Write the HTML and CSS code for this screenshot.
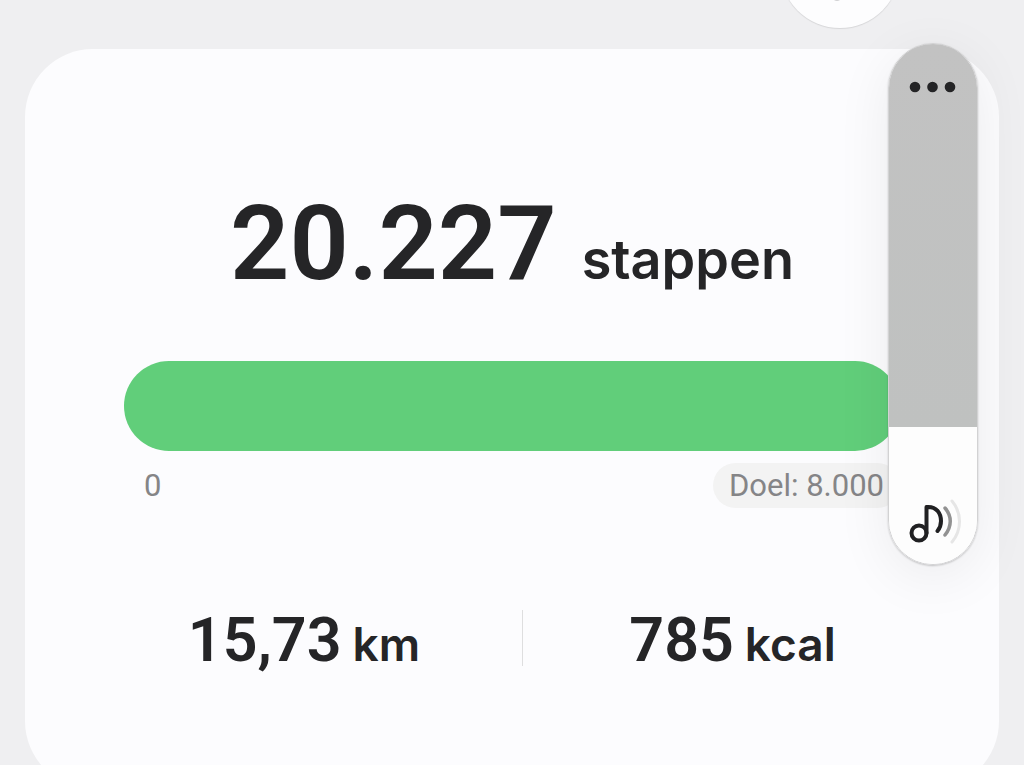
FILE: index.html
```html
<!DOCTYPE html>
<html lang="nl">
<head>
  <meta charset="utf-8">
  <meta name="viewport" content="width=device-width, initial-scale=1">
  <title>Stappen</title>
  <link rel="stylesheet" href="styles.css">
</head>
<body>

    <header class="top">
        <button class="round-button" type="button" aria-label="Info">
            <svg width="20" height="20" viewBox="0 0 20 20"><circle cx="7" cy="10" r="5" fill="#d2d2d4"/></svg>
        </button>
    </header>

    <main class="card">
        <h1 class="steps">
            <span class="steps-value">20.227</span>
            <span class="steps-unit">stappen</span>
        </h1>

        <progress class="bar" value="8000" max="8000" aria-label="Stappen"></progress>

        <div class="scale">
            <span class="scale-start">0</span>
            <span class="goal">Doel: 8.000</span>
        </div>

        <div class="stats">
            <div class="stat stat-distance">
                <span class="stat-value">15,73</span>
                <span class="stat-unit">km</span>
            </div>
            <div class="stat stat-energy">
                <span class="stat-value">785</span>
                <span class="stat-unit">kcal</span>
            </div>
        </div>
    </main>

    <!-- media volume, floats over the page -->
    <div class="volume">
        <input class="volume-slider" type="range" min="0" max="100" value="27" aria-label="Volume">
        <button class="volume-more" type="button" aria-label="Meer">
            <svg width="48" height="12" viewBox="0 0 48 12" fill="#242426">
                <circle cx="6" cy="6" r="5.3"/>
                <circle cx="23.500" cy="6" r="5.3"/>
                <circle cx="41" cy="6" r="5.3"/>
            </svg>
        </button>
        <svg class="volume-icon" width="56" height="48" viewBox="0 0 56 48" fill="none" stroke-width="4" stroke-linecap="round" stroke-linejoin="round">
            <circle cx="12" cy="35" r="7.5" stroke="#202022"/>
            <path d="M19.500 35V9C30 8 34 16 34 23C34 27 33 30 30.500 33" stroke="#202022"/>
            <path d="M38 10C45 18 45 28 38 37" stroke="#929292" stroke-width="3.500"/>
            <path d="M45 3C55 15 55 32 45 44" stroke="#e6e6e6" stroke-width="3"/>
        </svg>
    </div>

</body>
</html>
```
FILE: styles.css
```css
* {
    box-sizing: border-box;
}

body {
    margin: 0;
    height: 100vh;
    overflow: hidden;
    background: #efeff1;
    color: #252527;
    font-family: Roboto, "Liberation Sans", sans-serif;
}

button {
    padding: 0;
    border: 0;
    background: none;
    cursor: pointer;
}

svg {
    display: block;
}

.top {
    display: flex;
    align-items: flex-end;
    justify-content: flex-end;
    height: 49px;
    padding: 0 124px 21px;
}

.round-button {
    display: flex;
    flex: none;
    align-items: center;
    justify-content: center;
    width: 120px;
    height: 120px;
    border-radius: 50%;
    background: #fdfdfe;
    box-shadow: 0 1px 1px rgba(0, 0, 0, 0.1);
}

.round-button svg {
    margin-top: 56px;
}

.card {
    margin: 0 25px;
    padding: 135px 99px 123px;
    border-radius: 68px;
    background: #fcfcfe;
}

.steps {
    display: flex;
    align-items: baseline;
    justify-content: center;
    gap: 25px;
    height: 120px;
    margin: 0;
    line-height: 120px;
    font-weight: 600;
}

.steps-value {
    font-size: 104px;
}

.steps-unit {
    font-family: Inter, sans-serif;
    font-size: 54px;
}

.bar {
    display: block;
    width: 100%;
    height: 90px;
    margin-top: 57px;
    border: 0;
    border-radius: 45px;
    background: #eeeeef;
    overflow: hidden;
    -webkit-appearance: none;
            appearance: none;
}

.bar::-webkit-progress-bar {
    background: #eeeeef;
}

.bar::-webkit-progress-value {
    background: #61ce7a;
}

.bar::-moz-progress-bar {
    background: #61ce7a;
}

.scale {
    display: flex;
    justify-content: space-between;
    margin-top: 12px;
    padding-left: 20px;
    color: #858587;
    font-size: 31px;
    line-height: 45px;
}

.goal {
    padding: 0 16px;
    border-radius: 23px;
    background: #f3f3f3;
}

.stats {
    display: flex;
    height: 56px;
    margin: 102px -42px 0 -38px;
}

.stat {
    display: flex;
    align-items: baseline;
    justify-content: center;
    gap: 11px;
    font-weight: 600;
    line-height: 60px;
}

.stat-distance {
    flex: 51;
    border-right: 1px solid #dededf;
}

.stat-energy {
    flex: 49;
}

.stat-value {
    font-size: 61px;
}

.stat-unit {
    font-family: Inter, sans-serif;
    font-size: 46px;
}

.volume {
    position: absolute;
    top: 43px;
    right: 46px;
    width: 90px;
    height: 522px;
    border: 1px solid #d2d2d3;
    border-radius: 45px;
    overflow: hidden;
    box-shadow: 0 1px 2px rgba(0, 0, 0, 0.2), 0 12px 56px rgba(0, 0, 0, 0.07);
}

.volume-slider {
    display: block;
    width: 100%;
    height: 100%;
    margin: 0;
    background: linear-gradient(to top, #fdfdfd 137px, #bfc1c0 137px, #c2c2c2);
    writing-mode: vertical-lr;
    direction: rtl;
    -webkit-appearance: none;
            appearance: none;
}

.volume-slider::-webkit-slider-thumb {
    width: 88px;
    height: 2px;
    background: transparent;
    -webkit-appearance: none;
            appearance: none;
}

.volume-more {
    position: absolute;
    top: 37px;
    left: 20px;
}

.volume-icon {
    position: absolute;
    bottom: 18px;
    left: 18px;
}
```
